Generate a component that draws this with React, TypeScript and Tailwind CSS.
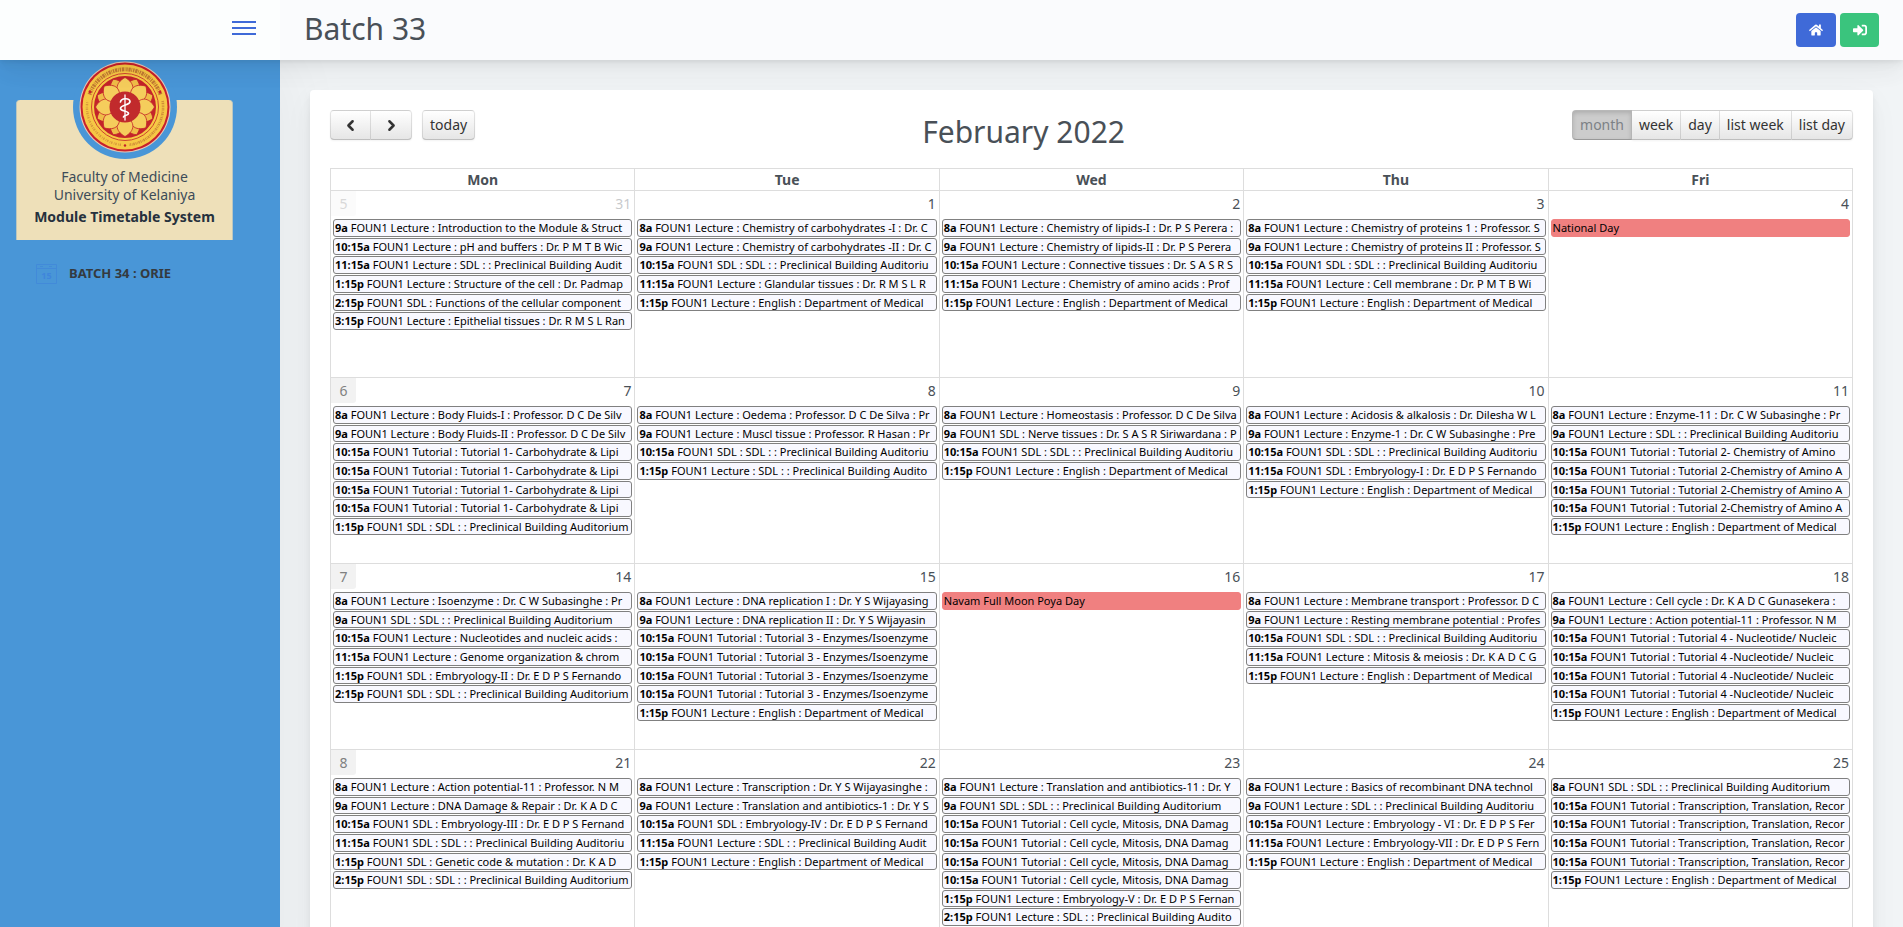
import { FaHome, FaSignInAlt } from "react-icons/fa";
import { FiChevronLeft, FiChevronRight } from "react-icons/fi";

type CalendarEvent = {
  time?: string;
  title: string;
};

type Day = {
  date: number;
  otherMonth?: boolean;
  events: CalendarEvent[];
};

type Week = {
  number: number;
  days: Day[];
};

const dayNames = ["Mon", "Tue", "Wed", "Thu", "Fri"];
const views = ["month", "week", "day", "list week", "list day"];

// "10:15a|Title" is a timed event, a line without the bar is a holiday
function day(date: number, lines: string[], otherMonth = false): Day {
  return {
    date,
    otherMonth,
    events: lines.map((line) => {
      const [time, title] = line.split("|");
      return title ? { time, title: `FOUN1 ${title}` } : { title: time };
    }),
  };
}

const english = "1:15p|Lecture : English : Department of Medical";
const sdlMorning = "10:15a|SDL : SDL : : Preclinical Building Auditoriu";
const tutorial1 = "10:15a|Tutorial : Tutorial 1- Carbohydrate & Lipi";
const tutorial2 = "10:15a|Tutorial : Tutorial 2-Chemistry of Amino A";
const tutorial3 = "10:15a|Tutorial : Tutorial 3 - Enzymes/Isoenzyme";
const tutorial4 = "10:15a|Tutorial : Tutorial 4 -Nucleotide/ Nucleic";
const cellCycle = "10:15a|Tutorial : Cell cycle, Mitosis, DNA Damag";
const transcription = "10:15a|Tutorial : Transcription, Translation, Recor";

const weeks: Week[] = [
  {
    number: 5,
    days: [
      day(
        31,
        [
          "9a|Lecture : Introduction to the Module & Struct",
          "10:15a|Lecture : pH and buffers : Dr. P M T B Wic",
          "11:15a|Lecture : SDL : : Preclinical Building Audit",
          "1:15p|Lecture : Structure of the cell : Dr. Padmap",
          "2:15p|SDL : Functions of the cellular component",
          "3:15p|Lecture : Epithelial tissues : Dr. R M S L Ran",
        ],
        true,
      ),
      day(1, [
        "8a|Lecture : Chemistry of carbohydrates -I : Dr. C",
        "9a|Lecture : Chemistry of carbohydrates -II : Dr. C",
        sdlMorning,
        "11:15a|Lecture : Glandular tissues : Dr. R M S L R",
        english,
      ]),
      day(2, [
        "8a|Lecture : Chemistry of lipids-I : Dr. P S Perera :",
        "9a|Lecture : Chemistry of lipids-II : Dr. P S Perera",
        "10:15a|Lecture : Connective tissues : Dr. S A S R S",
        "11:15a|Lecture : Chemistry of amino acids : Prof",
        english,
      ]),
      day(3, [
        "8a|Lecture : Chemistry of proteins 1 : Professor. S",
        "9a|Lecture : Chemistry of proteins II : Professor. S",
        sdlMorning,
        "11:15a|Lecture : Cell membrane : Dr. P M T B Wi",
        english,
      ]),
      day(4, ["National Day"]),
    ],
  },
  {
    number: 6,
    days: [
      day(7, [
        "8a|Lecture : Body Fluids-I : Professor. D C De Silv",
        "9a|Lecture : Body Fluids-II : Professor. D C De Silv",
        tutorial1,
        tutorial1,
        tutorial1,
        tutorial1,
        "1:15p|SDL : SDL : : Preclinical Building Auditorium",
      ]),
      day(8, [
        "8a|Lecture : Oedema : Professor. D C De Silva : Pr",
        "9a|Lecture : Muscl tissue : Professor. R Hasan : Pr",
        sdlMorning,
        "1:15p|Lecture : SDL : : Preclinical Building Audito",
      ]),
      day(9, [
        "8a|Lecture : Homeostasis : Professor. D C De Silva",
        "9a|SDL : Nerve tissues : Dr. S A S R Siriwardana : P",
        sdlMorning,
        english,
      ]),
      day(10, [
        "8a|Lecture : Acidosis & alkalosis : Dr. Dilesha W L",
        "9a|Lecture : Enzyme-1 : Dr. C W Subasinghe : Pre",
        sdlMorning,
        "11:15a|SDL : Embryology-I : Dr. E D P S Fernando",
        english,
      ]),
      day(11, [
        "8a|Lecture : Enzyme-11 : Dr. C W Subasinghe : Pr",
        "9a|Lecture : SDL : : Preclinical Building Auditoriu",
        "10:15a|Tutorial : Tutorial 2- Chemistry of Amino",
        tutorial2,
        tutorial2,
        tutorial2,
        english,
      ]),
    ],
  },
  {
    number: 7,
    days: [
      day(14, [
        "8a|Lecture : Isoenzyme : Dr. C W Subasinghe : Pr",
        "9a|SDL : SDL : : Preclinical Building Auditorium",
        "10:15a|Lecture : Nucleotides and nucleic acids :",
        "11:15a|Lecture : Genome organization & chrom",
        "1:15p|SDL : Embryology-II : Dr. E D P S Fernando",
        "2:15p|SDL : SDL : : Preclinical Building Auditorium",
      ]),
      day(15, [
        "8a|Lecture : DNA replication I : Dr. Y S Wijayasing",
        "9a|Lecture : DNA replication II : Dr. Y S Wijayasin",
        tutorial3,
        tutorial3,
        tutorial3,
        tutorial3,
        english,
      ]),
      day(16, ["Navam Full Moon Poya Day"]),
      day(17, [
        "8a|Lecture : Membrane transport : Professor. D C",
        "9a|Lecture : Resting membrane potential : Profes",
        sdlMorning,
        "11:15a|Lecture : Mitosis & meiosis : Dr. K A D C G",
        english,
      ]),
      day(18, [
        "8a|Lecture : Cell cycle : Dr. K A D C Gunasekera :",
        "9a|Lecture : Action potential-11 : Professor. N M",
        "10:15a|Tutorial : Tutorial 4 - Nucleotide/ Nucleic",
        tutorial4,
        tutorial4,
        tutorial4,
        english,
      ]),
    ],
  },
  {
    number: 8,
    days: [
      day(21, [
        "8a|Lecture : Action potential-11 : Professor. N M",
        "9a|Lecture : DNA Damage & Repair : Dr. K A D C",
        "10:15a|SDL : Embryology-III : Dr. E D P S Fernand",
        "11:15a|SDL : SDL : : Preclinical Building Auditoriu",
        "1:15p|SDL : Genetic code & mutation : Dr. K A D",
        "2:15p|SDL : SDL : : Preclinical Building Auditorium",
      ]),
      day(22, [
        "8a|Lecture : Transcription : Dr. Y S Wijayasinghe :",
        "9a|Lecture : Translation and antibiotics-1 : Dr. Y S",
        "10:15a|SDL : Embryology-IV : Dr. E D P S Fernand",
        "11:15a|Lecture : SDL : : Preclinical Building Audit",
        english,
      ]),
      day(23, [
        "8a|Lecture : Translation and antibiotics-11 : Dr. Y",
        "9a|SDL : SDL : : Preclinical Building Auditorium",
        cellCycle,
        cellCycle,
        cellCycle,
        cellCycle,
        "1:15p|Lecture : Embryology-V : Dr. E D P S Fernan",
        "2:15p|Lecture : SDL : : Preclinical Building Audito",
      ]),
      day(24, [
        "8a|Lecture : Basics of recombinant DNA technol",
        "9a|Lecture : SDL : : Preclinical Building Auditoriu",
        "10:15a|Lecture : Embryology - VI : Dr. E D P S Fer",
        "11:15a|Lecture : Embryology-VII : Dr. E D P S Fern",
        english,
      ]),
      day(25, [
        "8a|SDL : SDL : : Preclinical Building Auditorium",
        transcription,
        transcription,
        transcription,
        transcription,
        english,
      ]),
    ],
  },
];

const panelShadow =
  "shadow-[0_7px_35px_rgba(4,9,20,0.03),0_15px_22px_rgba(4,9,20,0.03),0_4px_9px_rgba(4,9,20,0.05),0_2px_3px_rgba(4,9,20,0.03)]";

function Emblem() {
  const angles = Array.from({ length: 8 }, (_, index) => index * 45);

  return (
    <svg viewBox="-52 -52 104 104" className="-mt-[45px] size-[104px]" aria-hidden="true">
      <circle r="52" fill="#4996d7" />
      <circle r="45.5" fill="#e9c9b4" />
      <circle r="44.5" fill="#c8202b" />
      <circle r="42.5" fill="#f6c845" />

      {/* Inscription ring */}
      <path d="M-35.5 -12.5A37.6 37.6 0 0 1 35.5 -12.5" fill="none" stroke="#c27a33" strokeWidth="4" strokeDasharray="1.4 0.8 2.2 0.7 0.8 0.9" />
      <path d="M37.6 -6A38 38 0 0 1 4 37.8" fill="none" stroke="#cf8c38" strokeWidth="2.6" strokeDasharray="1 0.8 1.5 0.7 0.6 0.8" />
      <path d="M-4 37.8A38 38 0 0 1 -37.6 -6" fill="none" stroke="#d8983b" strokeWidth="2.4" strokeDasharray="1.4 0.9 0.7 1.4" />
      <circle cx="0" cy="38.5" r="1.2" fill="#c8202b" />
      <circle cx="-35" cy="-15" r="1.4" fill="#c8202b" />
      <circle cx="35" cy="-15" r="1.4" fill="#c8202b" />

      <circle r="33.5" fill="none" stroke="#c8362b" strokeWidth="0.9" />
      <circle r="31" fill="#c4242a" />

      {/* Lotus petals */}
      <g fill="#efbd48" stroke="#c4242a" strokeWidth="0.8">
        {angles.map((angle) => (
          <path key={angle} transform={`rotate(${angle + 22.5})`} d="M0 -10C-9 -17 -8 -26 0 -30C8 -26 9 -17 0 -10Z" />
        ))}
        {angles.map((angle) => (
          <path key={angle} transform={`rotate(${angle})`} fill="#f5cd5c" d="M0 -9C-11 -15 -10 -24 0 -29.5C10 -24 11 -15 0 -9Z" />
        ))}
      </g>
      <circle r="15.5" fill="#c12a2c" />

      {/* Staff and serpent */}
      <g fill="none" stroke="#fff" strokeLinecap="round">
        <path d="M0 -12V13" strokeWidth="1.3" />
        <path d="M-4.5 -5C-4 -9 4.5 -9.5 5 -5.5C5 -1.5 -4.5 -2.5 -4.5 1.5C-4.5 4.5 3.5 3.5 3.5 6.5C3.5 8.5 -1 8 -1.5 10" strokeWidth="1.7" />
      </g>
    </svg>
  );
}

function BatchIcon() {
  return (
    <svg viewBox="0 0 21 20" className="h-5 w-[21px]" fill="none" stroke="#428ad9" aria-hidden="true">
      <path d="M0.5 0.5H20.5V19.5H0.5ZM0.5 4.5H20.5" />
      <path d="M4 2.5H7M13 2.5H16" />
      <text x="10.5" y="15" textAnchor="middle" stroke="none" fill="#3f85dc" className="text-[9px] font-bold">
        15
      </text>
    </svg>
  );
}

function Sidebar() {
  return (
    <aside className="w-[280px] shrink-0 bg-[#4996d7] px-4 pt-10 shadow-[7px_0_60px_rgba(0,0,0,0.05)]">
      <div className="flex w-[217px] flex-col items-center rounded-t border-x border-[#b9c6c0] bg-[#eee0b9] pb-[14px] text-sm leading-[18px] text-[#3d4c58]">
        <Emblem />
        <p className="mt-[9px]">Faculty of Medicine</p>
        <p>University of Kelaniya</p>
        <p className="mt-1 font-bold text-[#26313d]">Module Timetable System</p>
      </div>

      <nav className="mt-4">
        <a href="#batch-34" className="flex h-9 items-center gap-3 px-5 text-[13px] font-bold text-[#343a40]">
          <BatchIcon />
          BATCH 34 : ORIE
        </a>
      </nav>
    </aside>
  );
}

function Header() {
  return (
    <header className={`relative z-10 flex h-[60px] bg-[#fafbfd] ${panelShadow}`}>
      <div className="flex w-[280px] shrink-0 items-start justify-end bg-[#fcfefe] pr-6 pt-[21px]">
        <button type="button" aria-label="Toggle menu">
          <svg viewBox="0 0 24 14" className="h-[14px] w-6 fill-[#3f6ad8]" aria-hidden="true">
            <path d="M0 0H24V2H0ZM0 6H24V8H0ZM0 12H24V14H0Z" />
          </svg>
        </button>
      </div>
      <div className="flex grow items-center justify-between px-6">
        <h1 className="pb-[2px] text-[30px] leading-9 text-[#495057]">Batch 33</h1>
        <div className="flex gap-1 text-sm text-white">
          <a href="#home" aria-label="Home" className="flex h-[34px] w-10 items-center justify-center rounded bg-[#3f6ad8]">
            <FaHome />
          </a>
          <a href="#login" aria-label="Sign in" className="flex h-[34px] w-[39px] items-center justify-center rounded bg-[#3ac47d]">
            <FaSignInAlt />
          </a>
        </div>
      </div>
    </header>
  );
}

const buttonBase =
  "flex h-[30px] items-center border border-black/10 border-b-black/25 text-sm first:rounded-l last:rounded-r not-first:border-l-0";
const buttonIdle =
  "bg-linear-to-b from-white to-[#e6e6e6] text-[#333] shadow-[0_1px_2px_rgba(0,0,0,0.05)]";
const buttonActive =
  "bg-[#cccccc] text-[#7c8186] shadow-[inset_0_2px_4px_rgba(0,0,0,0.15)]";

function Toolbar() {
  return (
    <div className="mb-[14px] flex items-start justify-between">
      <div className="flex gap-[10px]">
        <div className="flex">
          <button type="button" aria-label="Previous" className={`${buttonBase} ${buttonIdle} w-[41px] justify-center`}>
            <FiChevronLeft size={17} strokeWidth={3.5} />
          </button>
          <button type="button" aria-label="Next" className={`${buttonBase} ${buttonIdle} w-[41px] justify-center`}>
            <FiChevronRight size={17} strokeWidth={3.5} />
          </button>
        </div>
        <div className="flex">
          <button type="button" className={`${buttonBase} ${buttonIdle} px-[7px]`}>
            today
          </button>
        </div>
      </div>

      <h2 className="text-[30px] leading-[44px] text-[#495057]">February 2022</h2>

      <div className="flex">
        {views.map((view) => (
          <button
            key={view}
            type="button"
            className={`${buttonBase} ${view === "month" ? buttonActive : buttonIdle} px-[7px]`}
          >
            {view}
          </button>
        ))}
      </div>
    </div>
  );
}

function EventItem({ event }: { event: CalendarEvent }) {
  return (
    <a
      href="#event"
      className={`mx-[2px] mt-px block overflow-hidden rounded-[3px] border px-px pt-px text-[11px] leading-[1.33] whitespace-nowrap text-black ${
        event.time ? "border-[#808080] bg-[#f8f8ff]" : "border-[#f08080] bg-[#f08080]"
      }`}
    >
      {event.time && <b>{event.time} </b>}
      {event.title}
    </a>
  );
}

function DayCell({ day, weekNumber }: { day: Day; weekNumber?: number }) {
  return (
    <td className="border border-[#dddddd] p-0 align-top">
      <div className={`flex h-[27px] items-start ${day.otherMonth ? "opacity-30" : ""}`}>
        {weekNumber && (
          <span className="h-[25px] w-[25px] rounded-br-[3px] bg-[#f2f2f2] text-center text-sm leading-[26px] text-[#808080]">
            {weekNumber}
          </span>
        )}
        <span className="ml-auto pr-[3px] text-sm leading-[26px]">{day.date}</span>
      </div>
      {day.events.map((event, index) => (
        <EventItem key={index} event={event} />
      ))}
    </td>
  );
}

function Calendar() {
  return (
    <table className="w-full table-fixed border-collapse bg-white text-[#495057]">
      <thead>
        <tr className="h-[22px]">
          {dayNames.map((name) => (
            <th key={name} className="border border-[#dddddd] p-0 text-sm leading-[21px] font-bold">
              {name}
            </th>
          ))}
        </tr>
      </thead>
      <tbody>
        {weeks.map((week) => (
          <tr key={week.number} className="h-[186px] first:h-[187px]">
            {week.days.map((item, index) => (
              <DayCell key={item.date} day={item} weekNumber={index === 0 ? week.number : undefined} />
            ))}
          </tr>
        ))}
      </tbody>
    </table>
  );
}

export default function App() {
  return (
    <div className="flex min-h-screen flex-col bg-[#f1f4f6] font-['Noto_Sans','Open_Sans',sans-serif]">
      <Header />
      <div className="flex grow">
        <Sidebar />
        <main className="min-w-0 grow p-[30px]">
          <section className={`rounded bg-white p-5 ${panelShadow}`}>
            <Toolbar />
            <Calendar />
          </section>
        </main>
      </div>
    </div>
  );
}
